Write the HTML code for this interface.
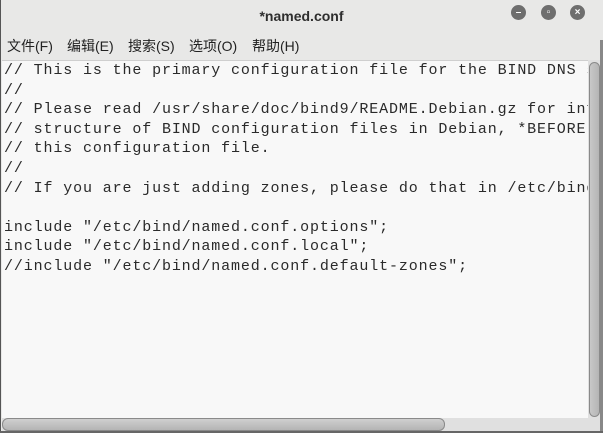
<!DOCTYPE html>
<html><head><meta charset="utf-8"><style>
body{margin:0;width:603px;height:433px;overflow:hidden;background:#e8e8e7;position:relative;font-family:"Liberation Sans","Noto Sans CJK SC",sans-serif}
.title{position:absolute;left:0;top:0;width:603px;height:30px;background:#e8e8e7;text-align:center;line-height:32px;font-weight:bold;font-size:14px;color:#2e2e2e}
.btn{position:absolute;top:5px;width:15px;height:15px;border-radius:50%;background:#6e6e6e;color:#fff;font-size:10px;line-height:15px;text-align:center;font-weight:bold}
.menu{position:absolute;left:0;top:36px;font-size:14px;color:#222}
.menu span{position:absolute;white-space:nowrap}
.ed{position:absolute;left:2px;top:60px;width:586px;height:358px;background:#f8f8f8;border-top:1px solid #cfcfcf;overflow:hidden}
pre{margin:0;position:absolute;left:2px;top:0px;font-family:"Liberation Mono",monospace;font-size:15px;letter-spacing:0.87px;line-height:19.6px;color:#2a2a2a}
.vs{position:absolute;left:588px;top:60px;width:12px;height:358px;background:#e0e0e0}
.vt{position:absolute;left:589px;top:62px;width:11px;height:355px;border:1px solid #8a8a8a;border-radius:6px;background:linear-gradient(90deg,#c8c8c8,#b4b4b4);box-sizing:border-box}
.hs{position:absolute;left:2px;top:418px;width:598px;height:13px;background:#e0e0e0}
.ht{position:absolute;left:2px;top:418px;width:443px;height:13px;border:1px solid #8a8a8a;border-radius:6px;background:linear-gradient(#cfcfcf,#b4b4b4);box-sizing:border-box}
.bl{position:absolute;left:0;top:0;width:1px;height:433px;background:#555}
.br{position:absolute;right:0;top:40px;width:3px;height:393px;background:#888}
.bb{position:absolute;left:0;bottom:0;width:603px;height:2px;background:#666}
</style></head><body>
<div class="title">*named.conf</div>
<div class="btn" style="left:511px">–</div>
<div class="btn" style="left:541px">▫</div>
<div class="btn" style="left:570px">×</div>
<div class="menu"><span style="left:7px">文件(F)</span><span style="left:67px">编辑(E)</span><span style="left:128px">搜索(S)</span><span style="left:189px">选项(O)</span><span style="left:252px">帮助(H)</span></div>
<div class="ed"><pre>// This is the primary configuration file for the BIND DNS server named.
//
// Please read /usr/share/doc/bind9/README.Debian.gz for information on the
// structure of BIND configuration files in Debian, *BEFORE* you customize
// this configuration file.
//
// If you are just adding zones, please do that in /etc/bind/named.conf.local

include "/etc/bind/named.conf.options";
include "/etc/bind/named.conf.local";
//include "/etc/bind/named.conf.default-zones";</pre></div>
<div class="vs"></div><div class="vt"></div>
<div class="hs"></div><div class="ht"></div>
<div class="bl"></div><div class="br"></div><div class="bb"></div>
</body></html>
